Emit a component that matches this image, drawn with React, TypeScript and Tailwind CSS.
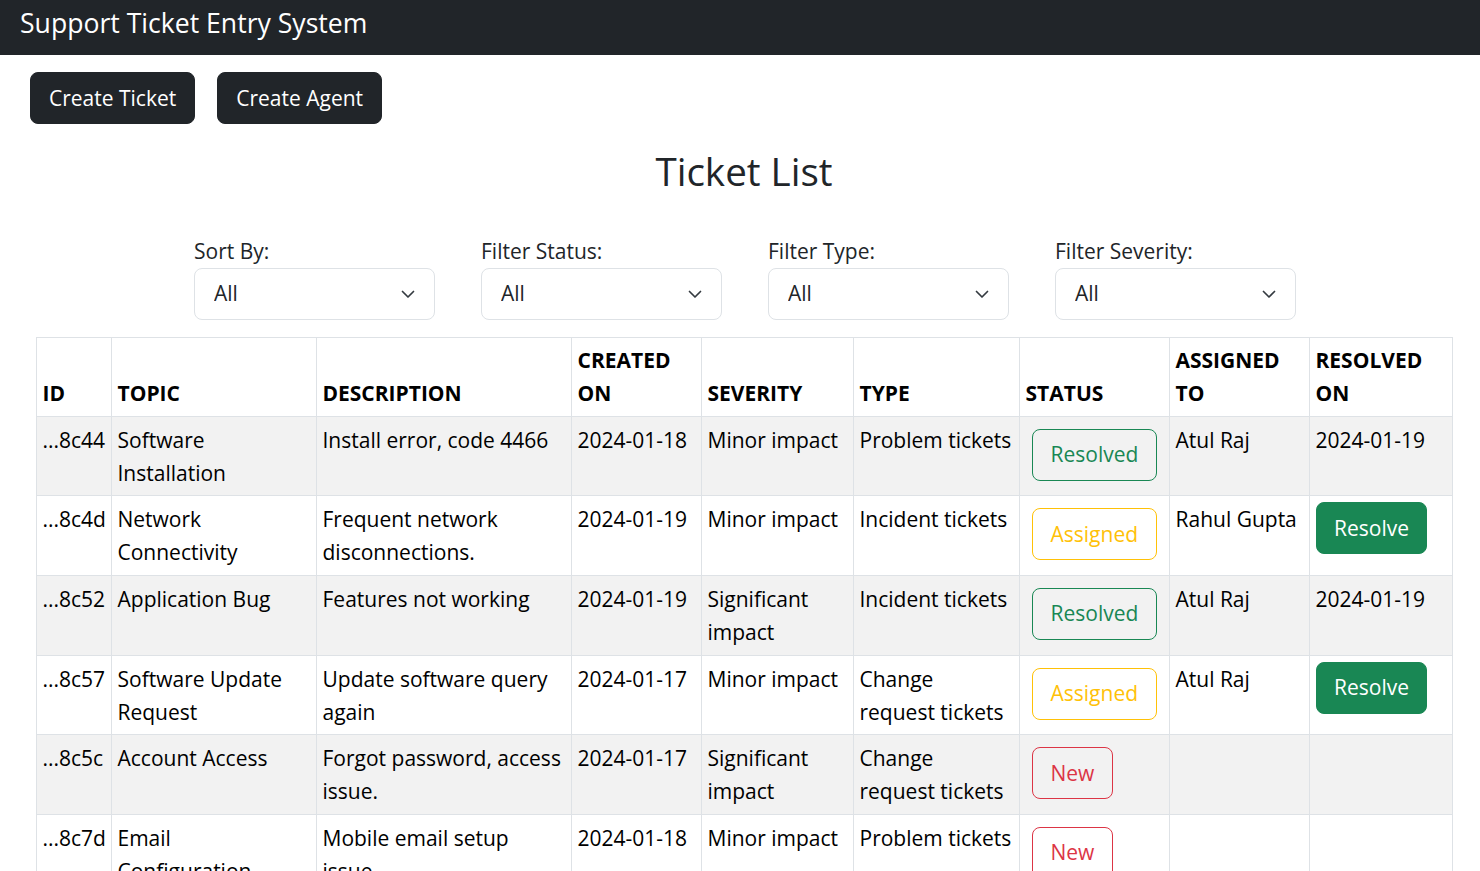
import React from 'react';

type Status = 'Resolved' | 'Assigned' | 'New';

interface Ticket {
    id: string;
    topic: string[];
    description: string[];
    createdOn: string;
    severity: string[];
    type: string[];
    status: Status;
    assignedTo: string;
    resolvedOn: string | null;
}

const tickets: Ticket[] = [
    {
        id: '...8c44',
        topic: ['Software', 'Installation'],
        description: ['Install error, code 4466'],
        createdOn: '2024-01-18',
        severity: ['Minor impact'],
        type: ['Problem tickets'],
        status: 'Resolved',
        assignedTo: 'Atul Raj',
        resolvedOn: '2024-01-19',
    },
    {
        id: '...8c4d',
        topic: ['Network', 'Connectivity'],
        description: ['Frequent network', 'disconnections.'],
        createdOn: '2024-01-19',
        severity: ['Minor impact'],
        type: ['Incident tickets'],
        status: 'Assigned',
        assignedTo: 'Rahul Gupta',
        resolvedOn: null,
    },
    {
        id: '...8c52',
        topic: ['Application Bug'],
        description: ['Features not working'],
        createdOn: '2024-01-19',
        severity: ['Significant', 'impact'],
        type: ['Incident tickets'],
        status: 'Resolved',
        assignedTo: 'Atul Raj',
        resolvedOn: '2024-01-19',
    },
    {
        id: '...8c57',
        topic: ['Software Update', 'Request'],
        description: ['Update software query', 'again'],
        createdOn: '2024-01-17',
        severity: ['Minor impact'],
        type: ['Change', 'request tickets'],
        status: 'Assigned',
        assignedTo: 'Atul Raj',
        resolvedOn: null,
    },
    {
        id: '...8c5c',
        topic: ['Account Access'],
        description: ['Forgot password, access', 'issue.'],
        createdOn: '2024-01-17',
        severity: ['Significant', 'impact'],
        type: ['Change', 'request tickets'],
        status: 'New',
        assignedTo: '',
        resolvedOn: '',
    },
    {
        id: '...8c7d',
        topic: ['Email', 'Configuration'],
        description: ['Mobile email setup', 'issue'],
        createdOn: '2024-01-18',
        severity: ['Minor impact'],
        type: ['Problem tickets'],
        status: 'New',
        assignedTo: '',
        resolvedOn: '',
    },
];

const statusStyles: Record<Status, string> = {
    Resolved: 'border-[#198754] text-[#198754]',
    Assigned: 'border-[#ffc107] text-[#ffc107]',
    New: 'border-[#dc3545] text-[#dc3545]',
};

const headers: { lines: string[]; width: string }[] = [
    { lines: ['ID'], width: 'w-[75px]' },
    { lines: ['TOPIC'], width: 'w-[205px]' },
    { lines: ['DESCRIPTION'], width: 'w-[255px]' },
    { lines: ['CREATED', 'ON'], width: 'w-[130px]' },
    { lines: ['SEVERITY'], width: 'w-[152px]' },
    { lines: ['TYPE'], width: 'w-[166px]' },
    { lines: ['STATUS'], width: 'w-[150px]' },
    { lines: ['ASSIGNED', 'TO'], width: 'w-[140px]' },
    { lines: ['RESOLVED', 'ON'], width: 'w-[143px]' },
];

const filters = ['Sort By:', 'Filter Status:', 'Filter Type:', 'Filter Severity:'];

const Lines: React.FC<{ lines: string[] }> = ({ lines }) => (
    <>
        {lines.map((l, i) => (
            <div key={i} className="whitespace-nowrap">{l}</div>
        ))}
    </>
);

const Cell: React.FC<{ children: React.ReactNode }> = ({ children }) => (
    <td className="border border-[#dee2e6] align-top px-[5.5px] pt-[7px] pb-[5px]">{children}</td>
);

const FilterSelect: React.FC<{ label: string }> = ({ label }) => (
    <div className="w-[241px]">
        <div className="h-[28px] leading-[22px] text-[#212529]">{label}</div>
        <div className="relative">
            <select className="w-full h-[52px] appearance-none rounded-[8px] border border-[#dee2e6] bg-white pl-[19px] pr-[40px] text-[21px] leading-[33px] text-[#212529] outline-none">
                <option>All</option>
            </select>
            <svg
                className="pointer-events-none absolute right-[19px] top-1/2 -translate-y-1/2"
                width="16"
                height="16"
                viewBox="0 0 16 16"
                fill="none"
                stroke="#343a40"
                strokeWidth="1.7"
                strokeLinecap="round"
                strokeLinejoin="round"
            >
                <path d="m2.5 5.5 5.5 5.5 5.5-5.5" />
            </svg>
        </div>
    </div>
);

const App: React.FC = () => {
    return (
        <div className="min-h-screen bg-white text-[21px] leading-[33px] text-[#212529] font-['Open_Sans','Liberation_Sans',sans-serif]">
            <nav className="h-[55px] bg-[#212529] pl-[20px] pt-[3px]">
                <span className="text-[26.6px] leading-[40px] text-white">Support Ticket Entry System</span>
            </nav>

            <div className="mt-[17px] flex gap-[22px] pl-[30px]">
                <button className="flex h-[52px] items-center rounded-[8px] border border-[#212529] bg-[#212529] px-[18px] text-white">
                    Create Ticket
                </button>
                <button className="flex h-[52px] items-center rounded-[8px] border border-[#212529] bg-[#212529] px-[18px] text-white">
                    Create Agent
                </button>
            </div>

            <div className="pl-[36px] pr-[28px]">
                <h2 className="mt-[24px] text-center text-[38.6px] leading-[46px] font-medium text-[#212529]">Ticket List</h2>

                <div className="mt-[45.5px] flex justify-center gap-[46px] pl-[2px]">
                    {filters.map((f) => (
                        <FilterSelect key={f} label={f} />
                    ))}
                </div>

                <table className="mt-[17px] w-[1416px] table-fixed border-collapse text-black">
                    <colgroup>
                        {headers.map((h, i) => (
                            <col key={i} className={h.width} />
                        ))}
                    </colgroup>
                    <thead>
                        <tr>
                            {headers.map((h, i) => (
                                <th
                                    key={i}
                                    className="border border-[#dee2e6] align-bottom px-[5.5px] pt-[6px] pb-[6px] text-left font-bold"
                                >
                                    <Lines lines={h.lines} />
                                </th>
                            ))}
                        </tr>
                    </thead>
                    <tbody>
                        {tickets.map((t, idx) => (
                            <tr key={t.id} className={idx % 2 === 0 ? 'bg-[#f2f2f2]' : 'bg-white'}>
                                <Cell>{t.id}</Cell>
                                <Cell><Lines lines={t.topic} /></Cell>
                                <Cell><Lines lines={t.description} /></Cell>
                                <Cell>{t.createdOn}</Cell>
                                <Cell><Lines lines={t.severity} /></Cell>
                                <Cell><Lines lines={t.type} /></Cell>
                                <td className="border border-[#dee2e6] align-top p-[5.5px]">
                                    <div className="flex">
                                        <button
                                            className={`ml-[6.5px] mt-[6.5px] mb-[9.2px] flex h-[52px] items-center rounded-[8px] border bg-transparent px-[17.5px] ${statusStyles[t.status]}`}
                                        >
                                            {t.status}
                                        </button>
                                    </div>
                                </td>
                                <Cell>{t.assignedTo}</Cell>
                                {t.resolvedOn === null ? (
                                    <td className="border border-[#dee2e6] align-top px-[5.5px] pt-[6px]">
                                        <div className="flex">
                                            <button className="flex h-[52px] items-center rounded-[8px] border border-[#198754] bg-[#198754] px-[17.5px] text-white">
                                                Resolve
                                            </button>
                                        </div>
                                    </td>
                                ) : (
                                    <Cell>{t.resolvedOn}</Cell>
                                )}
                            </tr>
                        ))}
                    </tbody>
                </table>
            </div>
        </div>
    );
};

export default App;
